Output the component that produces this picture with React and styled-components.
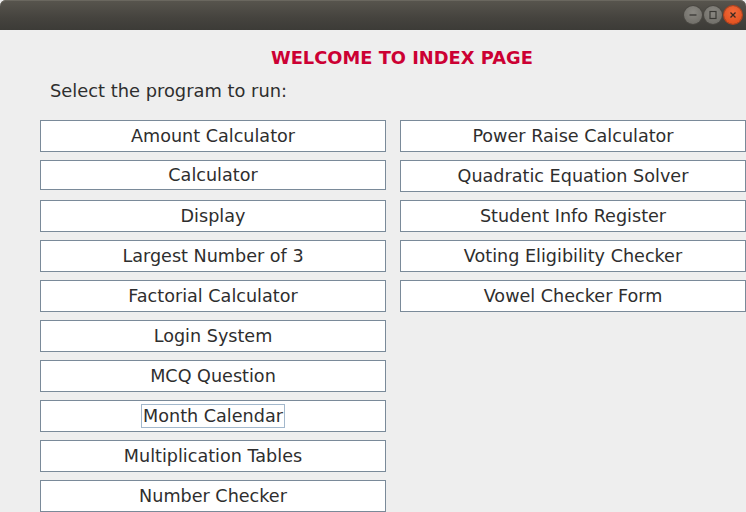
import React from "react";
import styled, { createGlobalStyle } from "styled-components";

const Global = createGlobalStyle`
  html, body { margin: 0; padding: 0; background: #eeeeee; }
  body { font-family: "DejaVu Sans", "Liberation Sans", sans-serif; overflow: hidden; }
`;

const Window = styled.div`
  width: 746px;
  height: 512px;
  display: flex;
  flex-direction: column;
  background: #eeeeee;
  overflow: hidden;
`;

const TitleBar = styled.div`
  height: 30px;
  flex: none;
  display: flex;
  align-items: center;
  justify-content: flex-end;
  gap: 2px;
  padding-right: 4px;
  border-radius: 6px 6px 0 0;
  background: linear-gradient(#58554e, #45433e 60%, #3c3b37);
  box-shadow: inset 0 1px 0 #6a675f;
`;

const WinBtn = styled.div`
  width: 18px;
  height: 18px;
  border-radius: 50%;
  display: flex;
  align-items: center;
  justify-content: center;
  background: ${(p) =>
    p.$close
      ? "radial-gradient(circle at 50% 35%, #f26a3b, #df4a16)"
      : "radial-gradient(circle at 50% 35%, #8a8882, #6b6963)"};
  box-shadow: 0 0 0 1px ${(p) => (p.$close ? "#b9411a" : "#4a4843")};
`;

const Content = styled.div`
  flex: 1;
  display: flex;
  flex-direction: column;
`;

const Heading = styled.div`
  margin-top: 17px;
  padding-left: 271px;
  height: 22px;
  font-weight: bold;
  font-size: 17.85px;
  color: #cc0033;
  line-height: 22px;
`;

const Prompt = styled.div`
  margin-top: 11px;
  padding-left: 50px;
  height: 22px;
  font-size: 17.85px;
  line-height: 22px;
  color: #2e2e2e;
`;

const Columns = styled.div`
  margin-top: 18px;
  padding-left: 40px;
  display: flex;
  gap: 14px;
  align-items: flex-start;
`;

const Column = styled.div`
  width: 346px;
  display: flex;
  flex-direction: column;
`;

const Button = styled.div`
  box-sizing: border-box;
  height: ${(p) => p.$h || 32}px;
  margin-bottom: ${(p) => 40 - (p.$h || 32)}px;
  padding-bottom: 1px;
  background: #ffffff;
  border: 1px solid #7a8a99;
  display: flex;
  align-items: center;
  justify-content: center;
  font-size: 17.6px;
  color: #2e2e2e;
  white-space: nowrap;
`;

const Focus = styled.span`
  border: 1px solid #a3b8cc;
  padding: 1px 1px 0;
  line-height: 21px;
`;

const left = [
  "Amount Calculator",
  "Calculator",
  "Display",
  "Largest Number of 3",
  "Factorial Calculator",
  "Login System",
  "MCQ Question",
  "Month Calendar",
  "Multiplication Tables",
  "Number Checker",
];
const right = [
  "Power Raise Calculator",
  "Quadratic Equation Solver",
  "Student Info Register",
  "Voting Eligibility Checker",
  "Vowel Checker Form",
];

export default function App() {
  return (
    <Window>
      <Global />
      <TitleBar>
        <WinBtn>
          <svg width="10" height="10" viewBox="0 0 10 10">
            <line x1="1.5" y1="5" x2="8.5" y2="5" stroke="#3a3935" strokeWidth="1.3" />
          </svg>
        </WinBtn>
        <WinBtn>
          <svg width="10" height="10" viewBox="0 0 10 10">
            <rect x="2" y="1.5" width="6" height="7" fill="none" stroke="#3a3935" strokeWidth="1.2" />
          </svg>
        </WinBtn>
        <WinBtn $close>
          <svg width="10" height="10" viewBox="0 0 10 10">
            <path d="M2.5 2.5 L7.5 7.5 M7.5 2.5 L2.5 7.5" stroke="#3a2a22" strokeWidth="1.3" />
          </svg>
        </WinBtn>
      </TitleBar>
      <Content>
        <Heading>WELCOME TO INDEX PAGE</Heading>
        <Prompt>Select the program to run:</Prompt>
        <Columns>
          <Column>
            {left.map((t) => (
              <Button key={t} $h={t === "Calculator" ? 30 : 32}>
                {t === "Month Calendar" ? <Focus>{t}</Focus> : t}
              </Button>
            ))}
          </Column>
          <Column>
            {right.map((t) => (
              <Button key={t}>{t}</Button>
            ))}
          </Column>
        </Columns>
      </Content>
    </Window>
  );
}
